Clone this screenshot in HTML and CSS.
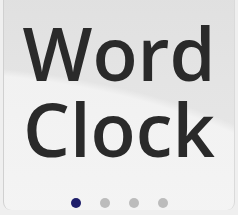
FILE: index.html
```html
<!DOCTYPE html>
<html>
<head>
<meta charset="utf-8">
<link rel="stylesheet" href="styles.css">
</head>
<body>
<div class="card">
  <div class="title">
    <span class="line">Word</span>
    <span class="line">Clock</span>
  </div>
  <div class="dots">
    <span class="dot active"></span>
    <span class="dot"></span>
    <span class="dot"></span>
    <span class="dot"></span>
  </div>
</div>
</body>
</html>
```
FILE: styles.css
```css
html, body {
  margin: 0;
  padding: 0;
  width: 238px;
  height: 215px;
  overflow: hidden;
  background: #efefef;
}
.card {
  box-sizing: border-box;
  margin: -6px 3px 0 3px;
  height: 216px;
  border-left: 1px solid #d0d0d0;
  border-right: 1px solid #dadada;
  border-radius: 0 0 8px 8px;
  background:
    radial-gradient(ellipse 500px 240px at -100px 310px, rgba(255,255,255,0.5) 0 97%, rgba(255,255,255,0) 100%),
    linear-gradient(#e0e0e0, #e4e4e4 40%, #e8e8e8);
  display: flex;
  flex-direction: column;
  align-items: center;
}
.title {
  font-family: "Open Sans", sans-serif;
  font-weight: 650;
  font-size: 74px;
  line-height: 76px;
  color: #2a2a2a;
  letter-spacing: 0;
  display: flex;
  flex-direction: column;
  align-items: center;
  margin-top: 21px;
  filter: blur(0.5px);
}
.line { display: block; }
.dots {
  display: flex;
  gap: 19px;
  margin-top: 31px;
  filter: blur(0.6px);
}
.dot {
  width: 10px;
  height: 10px;
  border-radius: 50%;
  background: #bcbcbc;
}
.dot.active { background: #1e1e6a; }
```
